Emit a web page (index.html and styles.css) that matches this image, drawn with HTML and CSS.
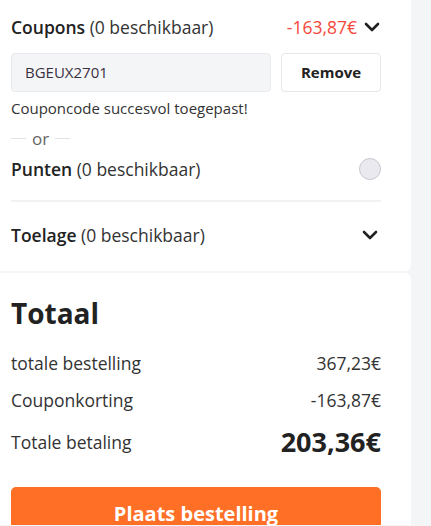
FILE: index.html
```html
<!DOCTYPE html>
<html lang="nl">
<head>
<meta charset="utf-8">
<link rel="stylesheet" href="styles.css">
</head>
<body>
<div class="page">
  <section class="card card-top">
    <div class="row head">
      <div class="label"><b>Coupons</b> (0 beschikbaar)</div>
      <div class="right">
        <span class="red">-163,87€</span>
        <svg class="chev" width="16" height="10" viewBox="0 0 16 10"><path d="M2 2 L8 8 L14 2" fill="none" stroke="#222" stroke-width="2.6" stroke-linecap="round" stroke-linejoin="round"/></svg>
      </div>
    </div>
    <div class="coupon">
      <div class="input">BGEUX2701</div>
      <div class="btn-remove">Remove</div>
    </div>
    <div class="msg">Couponcode succesvol toegepast!</div>
    <div class="or"><span class="line"></span><span>or</span><span class="line"></span></div>
    <div class="row punten">
      <div class="label"><b>Punten</b> (0 beschikbaar)</div>
      <span class="radio"></span>
    </div>
    <div class="divider"></div>
    <div class="row toelage">
      <div class="label"><b>Toelage</b> (0 beschikbaar)</div>
      <svg class="chev chev2" width="16" height="10" viewBox="0 0 16 10"><path d="M2 2 L8 8 L14 2" fill="none" stroke="#222" stroke-width="2.6" stroke-linecap="round" stroke-linejoin="round"/></svg>
    </div>
  </section>
  <section class="card card-bottom">
    <h2 class="title">Totaal</h2>
    <div class="line-row r1"><span>totale bestelling</span><span>367,23€</span></div>
    <div class="line-row r2"><span>Couponkorting</span><span>-163,87€</span></div>
    <div class="line-row total"><span>Totale betaling</span><span class="big">203,36€</span></div>
    <div class="order">Plaats bestelling</div>
  </section>
</div>
</body>
</html>
```

FILE: styles.css
```css
html, body {
  margin: 0;
  padding: 0;
  background: #f4f5f7;
  font-family: "Open Sans", "Noto Sans", sans-serif;
  color: #333;
}
.page {
  width: 411px;
  display: flex;
  flex-direction: column;
  gap: 2px;
}
.card {
  background: #fff;
  box-sizing: border-box;
  padding-left: 11px;
  padding-right: 30px;
}
.card-top {
  padding-top: 16px;
  padding-bottom: 25px;
  border-radius: 0 0 6px 0;
}
.card-bottom {
  padding-top: 20px;
  border-radius: 0 6px 0 0;
  height: 252px;
}
.row {
  display: flex;
  justify-content: space-between;
  align-items: center;
  height: 22px;
  font-size: 17.5px;
  line-height: 22px;
}
.label { color: #333; }
.label b { font-weight: 600; color: #222; }
.right { display: flex; align-items: center; gap: 7px; }
.red { color: #f5473b; }
.chev { display: block; margin-right: 1px; }
.chev2 { margin-right: 3px; }
.coupon {
  margin-top: 15px;
  display: flex;
  gap: 10px;
  height: 39px;
}
.input {
  flex: 1;
  box-sizing: border-box;
  background: #f4f5f7;
  border: 1px solid #e9eaee;
  border-radius: 4px;
  font-size: 15px;
  line-height: 37px;
  padding-left: 13px;
  color: #3a3040;
}
.btn-remove {
  width: 100px;
  box-sizing: border-box;
  border: 1px solid #e6e6e9;
  border-radius: 4px;
  font-size: 15px;
  font-weight: 700;
  line-height: 37px;
  text-align: center;
  color: #222;
}
.msg {
  margin-top: 7px;
  font-size: 15px;
  line-height: 18px;
  color: #333;
}
.or {
  margin-top: 11px;
  display: flex;
  align-items: center;
  gap: 6px;
  height: 20px;
  font-size: 17px;
  color: #666;
}
.or .line {
  width: 15px;
  height: 1px;
  background: #e3e3e3;
}
.punten { margin-top: 10px; }
.radio {
  width: 22px;
  height: 22px;
  box-sizing: border-box;
  border-radius: 50%;
  background: #e9e9ef;
  border: 1px solid #c8c8cf;
}
.divider {
  margin-top: 20px;
  height: 2px;
  background: #f2f2f4;
}
.toelage { margin-top: 22px; }
.title {
  margin: 0;
  font-size: 28px;
  font-weight: 700;
  line-height: 40px;
  color: #222;
}
.line-row {
  display: flex;
  justify-content: space-between;
  align-items: center;
  font-size: 17.5px;
  line-height: 24px;
  color: #333;
}
.r1 { margin-top: 18px; }
.r2 { margin-top: 13px; }
.total { margin-top: 10px; line-height: 40px; }
.big {
  font-size: 27px;
  font-weight: 700;
  color: #222;
}
.order {
  margin-top: 25px;
  height: 52px;
  background: #ff6f26;
  border-radius: 5px;
  color: #fff;
  font-size: 20px;
  font-weight: 700;
  text-align: center;
  line-height: 54px;
}
```
